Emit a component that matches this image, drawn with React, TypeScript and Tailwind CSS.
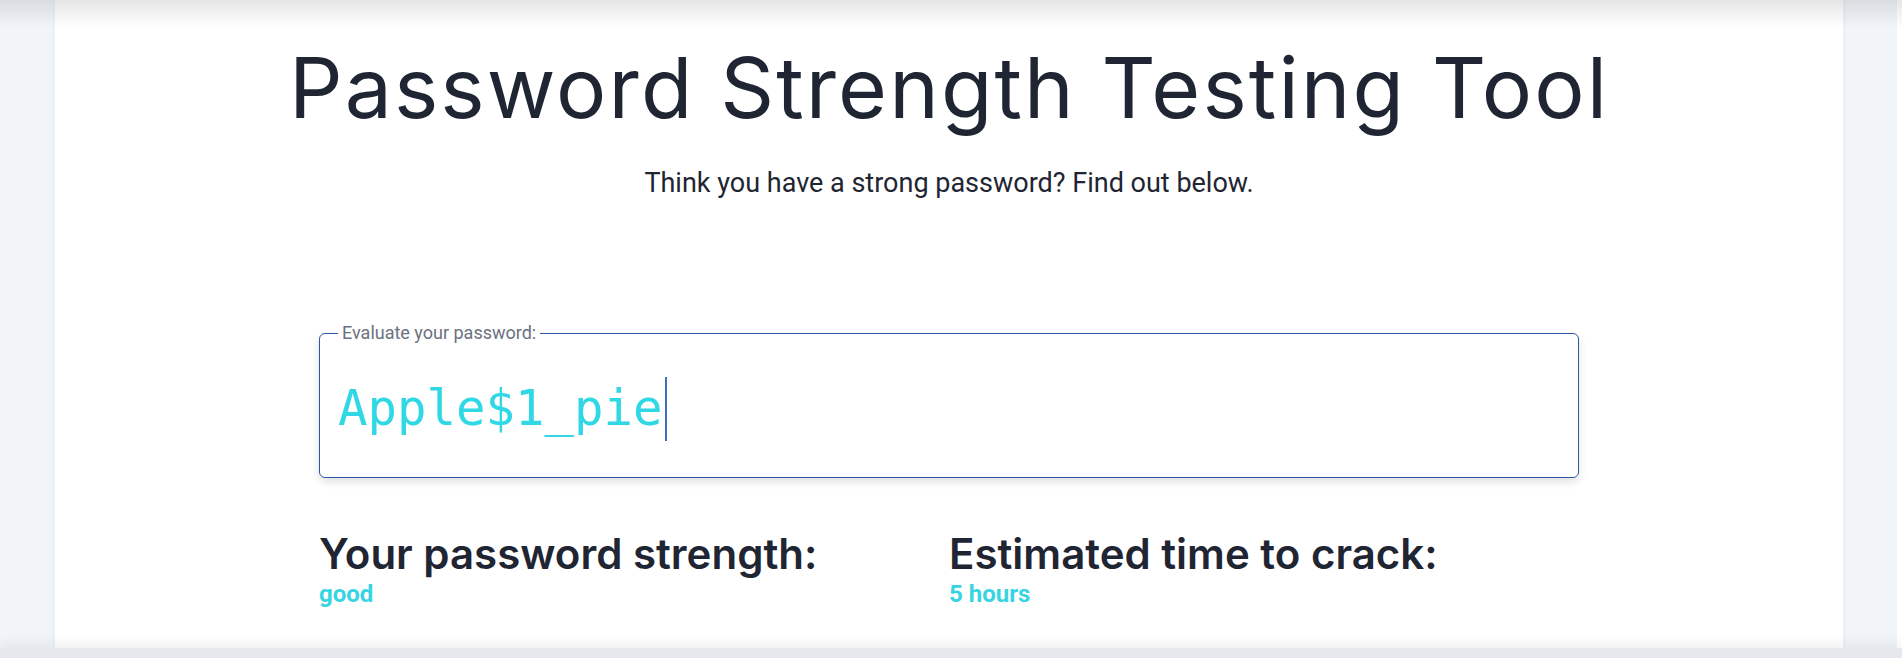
import React from "react";

const title = { fontFamily: "Inter, 'Noto Sans', sans-serif" };
const body = { fontFamily: "Roboto, 'Noto Sans', sans-serif" };

function ResultColumn({ label, value }: { label: string; value: string }) {
  return (
    <div>
      <h2
        className="text-[42px] font-semibold leading-[1.15] text-[#1f2532]"
        style={title}
      >
        {label}
      </h2>
      <p className="text-2xl font-bold leading-tight text-[#38d4e2]" style={body}>
        {value}
      </p>
    </div>
  );
}

export default function App() {
  return (
    <div className="relative flex min-h-[658px] flex-col bg-[#f1f5f9]">
      {/* shadow from the header above */}
      <div className="pointer-events-none absolute inset-x-0 top-0 h-[28px] bg-gradient-to-b from-black/10 to-transparent" />

      <div className="flex flex-1">
        <div className="w-[55px] shrink-0" />
        <main className="flex-1 bg-white pt-[38px] shadow-[0_0_6px_rgba(0,0,0,0.05)]">
          {/* Header */}
          <h1
            className="whitespace-nowrap text-center text-[84px] font-normal leading-[1.2] tracking-[0.025em] text-[#1f2532]"
            style={title}
          >
            Password Strength Testing Tool
          </h1>
          <p className="mt-[24px] text-center text-[27px] text-[#1f2532]" style={body}>
            Think you have a strong password? Find out below.
          </p>

          <div className="mx-auto w-[1260px]">
            {/* Password field */}
            <fieldset className="mt-[116px] h-[159px] rounded-md border border-[#2b58a6] px-[18px] shadow-[0_4px_8px_rgba(0,0,0,0.12)]">
              <legend className="px-1 text-lg text-[#6b7280]" style={body}>
                Evaluate your password:
              </legend>
              <div className="mt-[30px] flex items-center">
                <span
                  className="text-[49px] leading-[64px] text-[#2fd8e4]"
                  style={{ fontFamily: "'DejaVu Sans Mono', monospace" }}
                >
                  Apple$1_pie
                </span>
                <span className="ml-[2px] h-[64px] w-[2px] bg-[#3b6fc0]" />
              </div>
            </fieldset>

            {/* Results */}
            <div className="mt-[52px] grid grid-cols-2">
              <ResultColumn label="Your password strength:" value="good" />
              <ResultColumn label="Estimated time to crack:" value="5 hours" />
            </div>
          </div>
        </main>
        <div className="w-[54px] shrink-0" />
        <div className="w-[5px] shrink-0 bg-white" />
      </div>

      {/* footer edge */}
      <div className="h-[10px] bg-[#e6e8ee] shadow-[0_-6px_10px_rgba(0,0,0,0.06)]" />
    </div>
  );
}
